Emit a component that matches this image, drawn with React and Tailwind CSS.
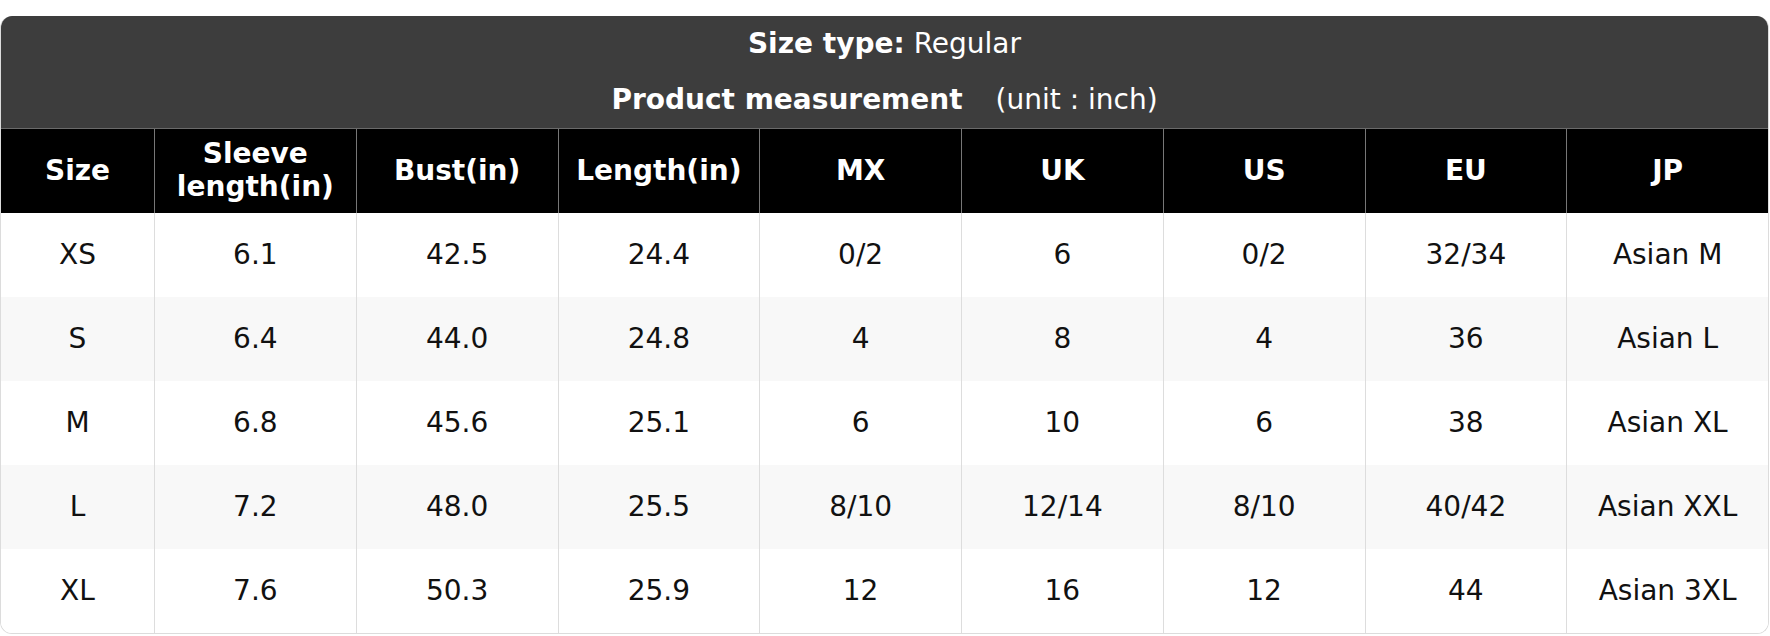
import React from 'react'

const columns = ['Size', 'Sleeve\nlength(in)', 'Bust(in)', 'Length(in)', 'MX', 'UK', 'US', 'EU', 'JP']

const rows = [
  ['XS', '6.1', '42.5', '24.4', '0/2', '6', '0/2', '32/34', 'Asian M'],
  ['S', '6.4', '44.0', '24.8', '4', '8', '4', '36', 'Asian L'],
  ['M', '6.8', '45.6', '25.1', '6', '10', '6', '38', 'Asian XL'],
  ['L', '7.2', '48.0', '25.5', '8/10', '12/14', '8/10', '40/42', 'Asian XXL'],
  ['XL', '7.6', '50.3', '25.9', '12', '16', '12', '44', 'Asian 3XL'],
]

function App() {
  return (
    <div className="pt-[16px] pr-[1px] bg-white" style={{ fontFamily: '"DejaVu Sans", sans-serif' }}>
      <div className="rounded-[12px] overflow-hidden border border-[#dcdcdc] border-t-0 text-[28px] leading-[1.164]">
        <div className="bg-[#3d3d3d] text-white">
          <div className="h-[56px] flex items-center justify-center">
            <span className="font-bold">Size type:</span>
            <span className="ml-[9px]">Regular</span>
          </div>
          <div className="h-[56px] flex items-center justify-center">
            <span className="font-bold">Product measurement</span>
            <span className="ml-[33px]">(unit : inch)</span>
          </div>
        </div>

        <div className="grid grid-cols-[153px_repeat(8,1fr)] bg-black text-white font-bold border-t border-[#6a6a6a]">
          {columns.map((c, i) => (
            <div
              key={c}
              className={`h-[84px] flex items-center justify-center text-center whitespace-pre-line ${i > 0 ? 'border-l border-[#777]' : ''}`}
            >
              {c}
            </div>
          ))}
        </div>

        {rows.map((r, ri) => (
          <div
            key={r[0]}
            className={`grid grid-cols-[153px_repeat(8,1fr)] text-[#111] ${ri % 2 === 1 ? 'bg-[#f8f8f8]' : 'bg-white'}`}
          >
            {r.map((v, i) => (
              <div
                key={i}
                className={`h-[84px] flex items-center justify-center ${i > 0 ? 'border-l border-[#dddddd]' : ''}`}
              >
                {v}
              </div>
            ))}
          </div>
        ))}
      </div>
    </div>
  )
}

export default App
